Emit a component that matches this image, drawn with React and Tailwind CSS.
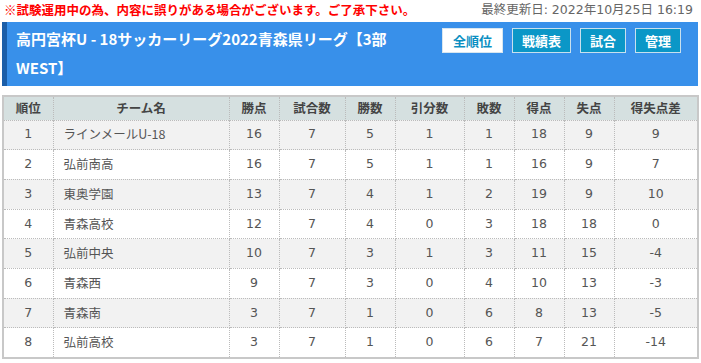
import React from "react";

const rows = [
  [1, "ラインメールU-18", 16, 7, 5, 1, 1, 18, 9, 9],
  [2, "弘前南高", 16, 7, 5, 1, 1, 16, 9, 7],
  [3, "東奥学園", 13, 7, 4, 1, 2, 19, 9, 10],
  [4, "青森高校", 12, 7, 4, 0, 3, 18, 18, 0],
  [5, "弘前中央", 10, 7, 3, 1, 3, 11, 15, -4],
  [6, "青森西", 9, 7, 3, 0, 4, 10, 13, -3],
  [7, "青森南", 3, 7, 1, 0, 6, 8, 13, -5],
  [8, "弘前高校", 3, 7, 1, 0, 6, 7, 21, -14],
];

const heads = ["順位", "チーム名", "勝点", "試合数", "勝数", "引分数", "敗数", "得点", "失点", "得失点差"];
const widths = ["w-[50px]", "w-[176px]", "w-[50px]", "w-[66px]", "w-[50px]", "w-[69px]", "w-[50px]", "w-[50px]", "w-[50px]", "w-[84px]"];

const btn = "h-[25px] px-[9px] bg-[#0b97c7] text-white border border-[#c8e0ee] font-bold text-[13px]";

const App = () => {
  return (
    <div className="w-[701px] h-[363px] bg-white overflow-hidden px-[2px] font-['DejaVu_Sans','Noto_Sans_CJK_JP',sans-serif]">
      <div className="flex justify-between items-center h-[20px] pl-[2px] pr-[6px]">
        <span className="text-[#ff0000] font-bold text-[12.5px] leading-none font-['Noto_Sans_CJK_JP',sans-serif]">
          ※試験運用中の為、内容に誤りがある場合がございます。ご了承下さい。
        </span>
        <span className="text-[#666] text-[12.5px] leading-none">最終更新日: 2022年10月25日 16:19</span>
      </div>

      <div className="mt-[2px] mr-[1px] h-[64px] bg-[#3890ea] border-l-[5px] border-[#1b5ea8] flex justify-between items-start font-['Noto_Sans_CJK_JP',sans-serif]">
        <h1 className="pl-[9px] pt-[2px] w-[420px] text-white font-bold text-[15px] leading-[29px]">
          高円宮杯U - 18サッカーリーグ2022青森県リーグ【3部 WEST】
        </h1>
        <div className="flex gap-[9px] pt-[6px] pr-[17px]">
          <button className="h-[25px] px-[10px] bg-white text-[#0b8fc2] border border-[#d8e6ef] font-bold text-[13px]">全順位</button>
          <button className={btn}>戦績表</button>
          <button className={btn}>試合</button>
          <button className={btn}>管理</button>
        </div>
      </div>

      <table className="mt-[9px] border-collapse border-2 border-[#c8c8c8] text-[12.5px] text-[#555]">
        <thead>
          <tr className="bg-[#d5e0e0] h-[24px] font-['Noto_Sans_CJK_JP',sans-serif]">
            {heads.map((h, i) => (
              <th key={h} className={`${widths[i]} font-bold text-[#444] text-center border-r border-dotted border-[#bbb] p-0`}>
                {h}
              </th>
            ))}
          </tr>
        </thead>
        <tbody>
          {rows.map((r, ri) => (
            <tr key={ri} className={`h-[29.7px] ${ri % 2 === 0 ? "bg-[#f2f2f2]" : "bg-white"}`}>
              {r.map((c, ci) => (
                <td
                  key={ci}
                  className={
                    ci === 1
                      ? "border border-dotted border-[#bbb] p-0 text-left pl-[10px] font-['Noto_Sans_CJK_JP',sans-serif]"
                      : "border border-dotted border-[#bbb] p-0 text-center"
                  }
                >
                  {c}
                </td>
              ))}
            </tr>
          ))}
        </tbody>
      </table>
    </div>
  );
};

export default App;
